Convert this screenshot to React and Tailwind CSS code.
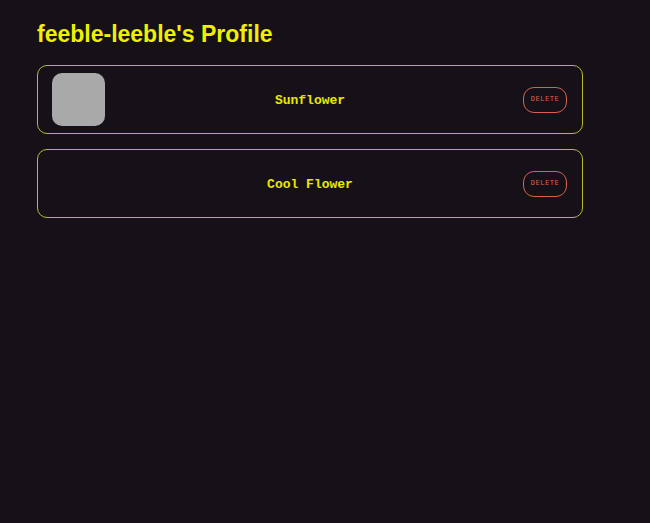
export default function App() {
  const flowers = [
    { name: "Sunflower", hasImage: true },
    { name: "Cool Flower", hasImage: false },
  ]

  return (
    <div className="w-full min-h-screen bg-[#161118] px-[37px] pt-[20px] font-['Liberation_Sans',Arial,sans-serif]">
      <h1 className="text-[23px] font-bold text-[#f0f000] leading-[28px]">
        feeble-leeble's Profile
      </h1>

      <div className="w-[546px] mt-[17px] flex flex-col gap-[15px]">
        {flowers.map((f) => (
          <div
            key={f.name}
            className="h-[69px] border border-[#b9b92a] rounded-[10px] px-[14px] grid grid-cols-[1fr_auto_1fr] items-center"
          >
            <div>
              {f.hasImage && (
                <div className="w-[53px] h-[53px] rounded-[10px] bg-[#a9a9a9]" />
              )}
            </div>
            <p className="font-['Liberation_Mono',monospace] font-bold text-[13px] pt-[2px] text-[#e8e800]">
              {f.name}
            </p>
            <div className="flex justify-end pr-[1px]">
              <button className="w-[44px] h-[26px] rounded-[11px] border border-[#d9614f] text-[7px] tracking-[0.5px] text-[#d9614f] font-['DejaVu_Sans_Mono',monospace]">
                DELETE
              </button>
            </div>
          </div>
        ))}
      </div>
    </div>
  )
}
